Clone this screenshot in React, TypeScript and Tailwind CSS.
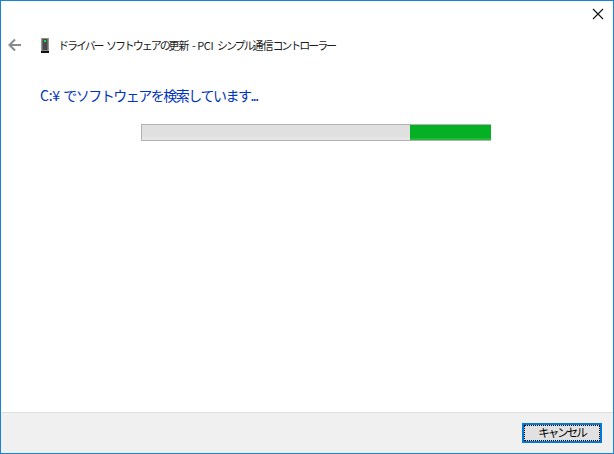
const font = { fontFamily: '"Noto Sans CJK JP", "Noto Sans", sans-serif' };

function BackArrow() {
  return (
    <svg width="16" height="16" viewBox="0 0 16 16" className="block" fill="none" stroke="#8a8a8a" strokeWidth="2">
      <path d="M14 8H3M8 2.5 2.5 8 8 13.5" />
    </svg>
  );
}

function DeviceIcon() {
  return (
    <svg width="12" height="16" viewBox="0 0 12 16" className="block">
      <rect x="2.5" y="1" width="7" height="13" fill="#4a4a4a" />
      <rect x="3" y="1.5" width="6" height="12" fill="none" stroke="#8c8c8c" strokeWidth="1" />
      <rect x="5" y="3" width="2" height="2" fill="#22e03a" />
      <rect x="2" y="14" width="8" height="2" fill="#111111" />
    </svg>
  );
}

export default function App() {
  return (
    <div className="flex h-[454px] w-[614px] flex-col overflow-hidden border border-[#1883d7] bg-white" style={font}>
      <div className="flex justify-end pr-[9px] pt-[7px]">
        <svg width="12" height="12" viewBox="0 0 12 12" fill="none" stroke="#111111" strokeWidth="1.1" className="block">
          <path d="M1 1 11 11M11 1 1 11" />
        </svg>
      </div>

      <div className="mt-[17px] flex items-center pl-[6px]">
        <BackArrow />
        <div className="ml-[16px]">
          <DeviceIcon />
        </div>
        <span className="ml-[7px] whitespace-nowrap text-[11px] leading-[16px] tracking-[-2.05px] text-[#1a1a1a] [word-spacing:3px]">
          ドライバー ソフトウェアの<span className="tracking-[-1px]">更新</span> - <span className="tracking-[-0.3px]">PCI</span> シンプル<span className="tracking-[-1px]">通信</span>コントローラー
        </span>
      </div>

      <h1 className="mt-[31px] whitespace-nowrap pl-[39px] text-[14px] font-normal leading-[22px] tracking-[-1.5px] text-[#0033bc] [word-spacing:2px]">
        <span className="tracking-[-0.3px]">C:¥</span> でソフトウェアを検索しています...
      </h1>

      <div className="ml-[140px] mt-[18px] flex h-[17px] w-[350px] border border-r-0 border-[#b2b2b2] bg-[#e0e0e0]">
        <div className="flex-1 border-b-[3px] border-[#e6e6e6]" />
        <div className="w-[81px] border-b-[2px] border-[#1fb936] bg-[#06b025]" />
      </div>

      <div className="mt-auto flex h-[41px] justify-end border-t border-[#dfdfdf] bg-[#f0f0f0] pr-[11px] pt-[10px]">
        <button className="flex h-[20px] w-[80px] items-center justify-center border-2 border-[#0078d7] bg-[#e1e1e1] text-[11.5px] leading-none tracking-[-2px] text-black outline-1 -outline-offset-3 outline-dotted outline-black">
          キャンセル
        </button>
      </div>
    </div>
  );
}
